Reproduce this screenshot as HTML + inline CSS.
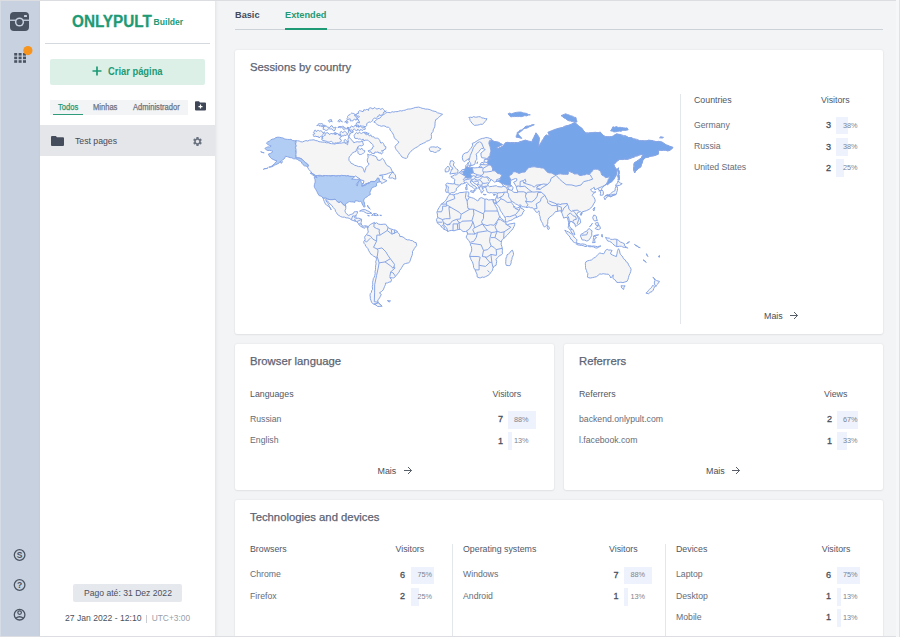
<!DOCTYPE html>
<html><head><meta charset="utf-8">
<style>
*{box-sizing:border-box;margin:0;padding:0}
html,body{width:900px;height:637px;overflow:hidden}
body{position:relative;background:#f3f4f6;font-family:"Liberation Sans",sans-serif;color:#5b6370}
.a{position:absolute;white-space:nowrap}
#side{left:0;top:0;width:40px;height:637px;background:#c8d1df;border-left:1px solid #d6dce6}
#panel{left:40px;top:0;width:175px;height:637px;background:#fff;box-shadow:1px 0 3px rgba(0,0,0,.08)}
#topline{left:0;top:0;width:900px;height:1px;background:#dcdde0}
#botline{left:0;top:636px;width:900px;height:1px;background:#dcdee2}
#rline{left:896px;top:0;width:4px;height:637px;background:#f6f7f9;border-right:1px solid #dfe1e4}
.card{position:absolute;background:#fff;border-radius:2px;box-shadow:0 0 2px rgba(0,0,0,.10),0 1px 2px rgba(0,0,0,.05)}
.ttl{margin-top:.7px;font-size:11.3px;color:#5c6473;position:absolute;white-space:nowrap;-webkit-text-stroke:.25px #5c6473}
.th{margin-top:-1px;font-size:8.8px;color:#505765;position:absolute;white-space:nowrap}
.td{margin-top:-.8px;font-size:8.7px;color:#666c78;position:absolute;white-space:nowrap}
.num{margin-top:.9px;font-size:9.1px;color:#4b505b;-webkit-text-stroke:.3px #4b505b;position:absolute;text-align:right;width:20px}
.bar{position:absolute;height:17.8px;margin-top:.5px;background:#edf2fc}
.pct{margin-top:-.8px;font-size:7.3px;color:#7d8491;position:absolute;white-space:nowrap}
.mais{margin-top:-.3px;font-size:8.9px;color:#4a4f59;position:absolute;white-space:nowrap}
.vdiv{position:absolute;width:1px;background:#e3e6ea}
</style></head><body>
<div id="side" class="a"></div>
<div id="panel" class="a"></div>
<div id="topline" class="a"></div>

<!-- sidebar icons -->
<svg class="a" style="left:0;top:0" width="40" height="637" viewBox="0 0 40 637">
  <rect x="10" y="12" width="19" height="19" rx="4" fill="#4a5361"/>
  <rect x="10" y="19.6" width="19" height="1.3" fill="#c8d1df"/>
  <circle cx="19.5" cy="22" r="4.6" fill="#c8d1df"/>
  <circle cx="19.5" cy="22" r="3.1" fill="#4a5361"/>
  <rect x="24" y="15" width="3" height="2" rx=".5" fill="#c8d1df"/>
  <g fill="#4a5361">
    <rect x="14.2" y="53" width="3" height="2.6"/><rect x="18.6" y="53" width="3" height="2.6"/><rect x="23" y="53" width="3" height="2.6"/>
    <rect x="14.2" y="56.6" width="3" height="2.6"/><rect x="18.6" y="56.6" width="3" height="2.6"/><rect x="23" y="56.6" width="3" height="2.6"/>
    <rect x="14.2" y="60.2" width="3" height="2.6"/><rect x="18.6" y="60.2" width="3" height="2.6"/><rect x="23" y="60.2" width="3" height="2.6"/>
  </g>
  <circle cx="27.9" cy="50.6" r="4.6" fill="#f7941d"/>
  <g fill="none" stroke="#4a5361" stroke-width="1.3">
    <circle cx="19.6" cy="555" r="5.3"/>
    <circle cx="19.6" cy="585" r="5.3"/>
    <circle cx="19.6" cy="614.7" r="5.3"/>
  </g>
  <text x="19.6" y="558.3" font-size="8.5" font-weight="bold" text-anchor="middle" fill="#4a5361" font-family="Liberation Sans">S</text>
  <text x="19.6" y="588.3" font-size="8.5" font-weight="bold" text-anchor="middle" fill="#4a5361" font-family="Liberation Sans">?</text>
  <circle cx="19.6" cy="612.6" r="1.8" fill="none" stroke="#4a5361" stroke-width="1.2"/>
  <path d="M15.8 618.3 Q19.6 615.2 23.4 618.3" fill="none" stroke="#4a5361" stroke-width="1.3"/>
</svg>

<!-- panel content -->
<div class="a" id="logo" style="left:72px;top:13px;font-size:16px;font-weight:bold;color:#1e9a75;-webkit-text-stroke:.3px #1e9a75;transform-origin:0 0;transform:scaleX(.955)">ONLYPULT</div>
<div class="a" id="builder" style="left:153.6px;top:17px;font-size:8.6px;font-weight:bold;color:#1e9a75">Builder</div>
<div class="a" style="left:45px;top:43px;width:165px;height:1px;background:#d5d9df"></div>
<div class="a" id="btn" style="left:50px;top:59px;width:155px;height:26px;background:#dcf0e8;border-radius:2px"></div>
<svg class="a" style="left:92px;top:66px" width="10" height="10"><path d="M5 .5V9.5M.5 5H9.5" stroke="#1e9a75" stroke-width="1.7"/></svg>
<div class="a" id="criar" style="left:107.5px;top:65px;font-size:10.7px;font-weight:bold;color:#1e9a75;transform-origin:0 0;transform:scaleX(.875)">Criar página</div>
<div class="a" style="left:50px;top:100px;width:138px;height:14.5px;background:#f3f4f6"></div>
<div class="a" style="left:52.5px;top:113.7px;width:30.5px;height:1.2px;background:#2f9c7c"></div>
<div class="a" id="todos" style="left:57.5px;top:102px;font-size:8.5px;color:#1e9a75;-webkit-text-stroke:.25px #1e9a75;transform-origin:0 0;transform:scaleX(.89)">Todos</div>
<div class="a" id="minhas" style="left:92.8px;top:102px;font-size:8.5px;color:#6b7280;-webkit-text-stroke:.25px #6b7280;transform-origin:0 0;transform:scaleX(.89)">Minhas</div>
<div class="a" id="admin" style="left:133px;top:102px;font-size:8.5px;color:#6b7280;-webkit-text-stroke:.25px #6b7280;transform-origin:0 0;transform:scaleX(.89)">Administrador</div>
<svg class="a" style="left:195px;top:101px" width="11" height="10" viewBox="0 0 11 10"><path d="M0 1.2Q0 .3 .9 .3H4L5 1.5H10Q11 1.5 11 2.5V8.6Q11 9.5 10 9.5H1Q0 9.5 0 8.6Z" fill="#3f4756"/><path d="M5.5 3.6V7.6M3.5 5.6H7.5" stroke="#fff" stroke-width="1.2"/></svg>
<div class="a" style="left:40px;top:125px;width:175px;height:31px;background:#e5e6e9"></div>
<svg class="a" style="left:51px;top:136px" width="13" height="10" viewBox="0 0 13 10"><path d="M0 1Q0 0 1 0H4.8L6 1.3H12Q13 1.3 13 2.3V9Q13 10 12 10H1Q0 10 0 9Z" fill="#454d5c"/></svg>
<div class="a" id="testpages" style="left:75px;top:135.5px;font-size:8.7px;color:#454b57">Test pages</div>
<svg class="a" style="left:192px;top:135.5px" width="11" height="11" viewBox="0 0 24 24"><path fill="#6b7280" d="M19.14 12.94c.04-.3.06-.61.06-.94 0-.32-.02-.64-.07-.94l2.03-1.58a.49.49 0 0 0 .12-.61l-1.92-3.32a.488.488 0 0 0-.59-.22l-2.39.96c-.5-.38-1.03-.7-1.62-.94l-.36-2.54a.484.484 0 0 0-.48-.41h-3.84c-.24 0-.43.17-.47.41l-.36 2.54c-.59.24-1.13.57-1.62.94l-2.39-.96c-.22-.08-.47 0-.59.22L2.74 8.87c-.12.21-.08.47.12.61l2.03 1.58c-.05.3-.09.63-.09.94s.02.64.07.94l-2.03 1.58a.49.49 0 0 0-.12.61l1.92 3.32c.12.22.37.29.59.22l2.39-.96c.5.38 1.03.7 1.62.94l.36 2.54c.05.24.24.41.48.41h3.84c.24 0 .44-.17.47-.41l.36-2.54c.59-.24 1.13-.56 1.62-.94l2.39.96c.22.08.47 0 .59-.22l1.92-3.32c.12-.22.07-.47-.12-.61l-2.01-1.58zM12 15.6c-1.98 0-3.6-1.62-3.6-3.6s1.62-3.6 3.6-3.6 3.6 1.62 3.6 3.6-1.62 3.6-3.6 3.6z"/></svg>

<div class="a" style="left:73px;top:584px;width:108.5px;height:18px;background:#e5e8ed;border-radius:2px"></div>
<div class="a" id="pago" style="left:84px;top:587.5px;font-size:8.6px;color:#4b5260">Pago até: 31 Dez 2022</div>
<div class="a" id="date" style="left:65px;top:613px;font-size:8.6px;color:#4b5260">27 Jan 2022 - 12:10</div><div class="a" style="left:146.4px;top:615.2px;width:1px;height:7.5px;background:#c9cdd3"></div><div class="a" id="utc" style="left:151.7px;top:613px;font-size:8.4px;color:#9aa0aa">UTC+3:00</div>

<!-- tabs -->
<div class="a" id="basic" style="left:235px;top:10px;font-size:9.2px;font-weight:bold;color:#434b59">Basic</div>
<div class="a" id="ext" style="left:285px;top:10px;font-size:9.2px;font-weight:bold;color:#1e9a75">Extended</div>
<div class="a" style="left:235px;top:29px;width:648px;height:1px;background:#cdd2d9"></div>
<div class="a" style="left:285px;top:27.5px;width:42px;height:2px;background:#1e9a75"></div>

<!-- card 1 -->
<div class="card" style="left:235px;top:50px;width:648px;height:284px"></div>
<div class="ttl" id="t1" style="left:250px;top:60px">Sessions by country</div>
<div class="vdiv" style="left:680px;top:94px;height:230px"></div>
<div class="th" id="h1" style="left:694px;top:95.5px">Countries</div>
<div class="th" style="left:821px;top:95.5px">Visitors</div>
<div class="td" style="left:694px;top:120.5px">Germany</div>
<div class="num" style="left:811px;top:119.5px">3</div>
<div class="bar" style="left:836px;top:116px;width:12px"></div>
<div class="pct" style="left:843px;top:121.5px">38%</div>
<div class="td" style="left:694px;top:141.7px">Russia</div>
<div class="num" style="left:811px;top:140.7px">3</div>
<div class="bar" style="left:836px;top:137.5px;width:12px"></div>
<div class="pct" style="left:843px;top:142.7px">38%</div>
<div class="td" style="left:694px;top:163px">United States</div>
<div class="num" style="left:811px;top:162px">2</div>
<div class="bar" style="left:836px;top:158.7px;width:8px"></div>
<div class="pct" style="left:843px;top:164px">25%</div>
<div class="mais" style="left:764px;top:311px">Mais</div>
<svg class="a" style="left:789px;top:311px" width="10" height="9" viewBox="0 0 10 9"><path d="M1 4.5H8.5M5 1L8.5 4.5L5 8" fill="none" stroke="#505661" stroke-width=".95"/></svg>
<!--MAP--><svg class="a" style="left:0;top:0" width="900" height="637" viewBox="0 0 900 637">
<g stroke="#88a6e6" stroke-width="1.0" stroke-linejoin="round">
<path fill="#f5f5f6" d="M450.1 193.5L451.3 192.7L453.8 192.7L455.2 191.6L456.5 190.1L456.0 189.0L457.3 187.4L458.8 186.5L460.1 185.2L460.9 183.9L462.4 183.9L464.6 183.3L466.4 182.3L467.5 182.8L468.0 183.6L469.1 185.1L470.2 185.9L471.8 186.7L473.1 187.6L473.9 188.4L474.6 189.8L474.1 191.0L474.6 191.2L475.8 189.6L475.9 187.8L477.2 188.6L476.8 187.6L475.5 186.9L474.8 185.8L472.5 185.0L471.7 183.4L470.6 182.9L470.3 180.9L472.0 180.6L472.1 181.8L472.7 181.1L473.6 182.8L475.0 183.6L476.9 184.8L478.4 186.6L478.5 187.8L479.2 188.9L480.9 190.6L481.0 192.5L481.9 193.1L482.3 191.6L483.3 191.2L483.9 190.4L482.4 189.2L482.4 187.6L483.4 188.4L484.1 187.2L485.8 187.3L486.1 188.2L486.1 188.5L486.7 190.5L487.4 192.3L489.4 192.9L491.3 192.5L492.7 193.0L495.7 192.6L497.5 192.9L497.1 194.3L496.7 196.3L496.1 197.8L495.4 199.5L494.8 199.9L493.1 199.6L493.3 201.4L494.4 202.7L495.2 204.1L496.1 201.9L496.9 204.6L498.6 206.4L499.7 208.5L500.2 210.1L500.9 211.6L502.2 212.8L502.8 214.4L503.8 215.6L504.7 217.1L505.4 218.6L505.4 220.4L505.7 222.1L507.5 221.8L508.9 220.8L510.6 220.5L512.2 219.8L513.9 218.5L515.8 217.6L517.9 216.9L519.3 216.1L520.9 215.6L522.1 214.6L523.0 212.3L524.4 210.4L523.0 209.1L520.9 208.1L520.4 205.7L519.3 207.1L517.2 208.0L515.0 208.4L514.7 206.1L513.9 207.4L513.5 205.3L512.3 203.7L510.9 202.1L511.6 201.3L514.1 202.6L515.5 203.9L517.2 204.6L518.8 205.5L520.4 204.7L522.1 206.7L523.7 206.8L525.3 207.1L527.1 207.6L529.0 206.9L530.7 207.8L532.6 207.7L533.5 208.9L534.8 210.2L535.5 211.5L537.1 212.6L539.0 210.8L539.3 212.7L539.2 214.6L540.1 216.6L540.3 218.8L541.5 221.7L542.6 223.3L543.1 225.2L544.5 227.2L545.8 225.8L547.3 224.7L547.8 223.1L547.7 221.5L548.0 219.6L548.8 217.9L551.1 216.1L552.6 214.9L554.0 213.6L555.4 211.6L557.1 211.5L558.8 211.0L560.8 210.7L562.1 213.3L562.5 214.9L563.2 216.5L563.6 218.1L566.0 217.3L567.4 217.5L568.1 220.4L568.6 222.3L568.6 225.2L568.2 227.5L569.3 228.9L570.5 230.3L571.8 233.1L573.3 233.7L574.5 235.0L574.9 234.8L574.0 232.1L572.8 229.5L570.8 228.3L569.7 226.5L569.2 224.5L570.0 222.1L570.8 221.1L573.0 222.5L574.9 224.4L575.6 226.7L576.8 225.5L578.2 224.7L580.6 222.9L580.6 220.7L579.5 218.0L578.2 216.3L576.6 214.9L577.8 212.4L580.5 211.6L581.8 213.0L582.0 212.0L584.1 211.3L586.3 210.7L589.2 209.3L590.8 208.0L592.5 206.1L593.7 203.8L595.1 201.4L595.1 199.8L594.0 197.5L592.2 195.3L593.3 193.6L595.9 191.8L594.3 192.1L592.7 192.1L591.6 190.8L590.4 189.7L592.5 188.5L594.2 187.3L594.8 189.8L596.3 189.1L597.8 188.5L599.1 190.1L600.5 191.7L600.5 193.4L600.2 195.2L601.7 195.3L603.2 194.8L603.4 193.0L603.1 191.3L601.4 189.4L601.6 188.5L603.0 187.3L604.1 185.9L605.0 185.2L606.5 184.1L607.6 184.6L609.4 183.0L611.5 181.9L612.7 180.4L613.8 178.8L615.2 177.5L616.0 175.7L616.5 173.9L616.6 172.0L617.1 169.6L615.4 168.2L614.3 166.3L613.6 164.2L615.4 163.3L616.3 161.5L617.9 160.6L619.4 159.4L621.1 159.6L622.8 159.0L624.5 159.2L626.3 158.7L628.0 159.1L629.6 158.7L631.2 158.2L632.7 157.4L634.3 157.1L635.7 156.1L637.3 155.9L638.8 155.1L640.4 154.8L642.0 154.5L643.6 154.1L642.9 155.5L641.8 156.8L641.3 158.4L639.7 158.9L638.6 160.1L637.1 160.8L636.1 162.1L634.5 162.6L634.0 164.4L633.8 166.3L633.7 168.2L633.6 169.8L634.0 171.4L634.6 172.9L635.6 171.2L637.0 169.7L638.8 168.2L640.8 166.9L641.3 164.7L642.2 162.5L642.8 160.3L643.7 158.7L645.3 157.7L646.9 157.3L648.4 156.7L650.0 156.2L651.6 155.8L653.3 155.8L655.1 155.5L656.6 154.3L658.4 154.1L658.2 152.1L658.4 150.1L660.2 150.1L661.9 150.6L663.7 150.0L665.5 150.4L667.2 150.6L669.0 150.6L670.5 149.9L671.8 148.8L673.0 147.5L671.4 146.6L669.6 146.4L668.0 145.7L666.4 145.0L664.8 144.1L663.5 142.7L661.8 142.1L660.2 141.4L658.5 141.9L656.8 141.7L655.1 141.4L653.5 141.1L651.9 140.7L650.2 140.4L648.4 140.4L646.7 140.7L644.9 141.0L643.1 140.7L641.4 140.7L639.6 140.7L638.1 140.1L636.6 139.3L635.0 139.0L633.4 138.7L631.8 138.1L630.3 137.6L628.5 137.6L627.1 136.7L625.4 135.9L623.7 135.6L621.9 135.0L620.2 134.6L618.3 134.5L616.6 134.0L615.0 135.0L613.5 136.1L611.7 136.7L609.6 136.6L607.5 137.1L605.5 136.7L603.9 135.9L602.7 134.7L601.4 133.6L600.3 132.2L598.7 132.5L597.1 132.8L595.4 133.0L593.8 132.9L592.1 133.1L590.5 132.9L588.8 133.3L587.2 132.7L585.5 133.1L584.5 131.6L583.2 130.2L581.5 127.9L579.7 127.0L578.1 125.6L576.4 124.3L575.1 122.7L573.3 123.6L571.5 124.3L569.8 125.2L567.9 125.6L566.1 125.9L564.3 126.4L562.8 127.4L561.0 127.9L558.8 128.5L556.5 129.1L554.9 130.1L553.2 130.8L551.4 131.2L549.7 132.0L548.0 132.4L548.8 134.4L550.2 136.1L548.2 135.9L546.2 135.1L544.5 136.7L544.0 138.7L542.3 140.0L541.7 141.9L540.5 143.4L539.7 145.2L538.3 146.5L538.5 144.8L538.2 143.0L538.9 141.3L539.4 139.6L539.2 137.8L538.4 136.0L537.2 134.4L536.0 132.9L535.5 134.5L534.7 135.9L534.1 137.5L533.2 138.8L532.4 140.5L532.0 142.3L530.3 141.7L528.7 141.0L526.9 140.9L525.2 140.2L523.4 141.1L521.4 141.3L519.5 141.8L517.8 142.8L516.0 142.5L514.3 142.5L512.6 142.5L510.8 142.5L509.1 143.0L507.3 142.7L505.6 142.7L504.7 144.0L503.6 145.2L502.4 146.6L500.7 147.3L497.9 148.6L496.1 147.7L499.0 146.3L500.5 145.1L502.4 144.6L500.3 143.6L498.4 142.3L496.3 142.1L494.2 141.5L491.8 140.4L491.7 139.0L489.7 138.4L487.8 137.7L485.7 137.6L484.1 138.2L482.4 138.4L480.8 138.9L479.3 139.5L477.8 140.4L476.0 141.6L474.2 142.7L472.2 143.4L472.7 145.2L471.9 146.8L470.9 148.3L469.9 149.7L468.6 150.9L467.7 152.5L465.4 152.9L463.4 154.1L462.6 155.8L462.3 157.7L462.8 160.1L464.3 161.8L465.7 160.7L467.2 159.7L468.5 158.6L468.9 160.5L469.9 162.2L470.8 163.8L471.1 165.7L474.1 164.7L475.0 163.9L475.3 162.1L475.4 160.8L476.9 159.6L476.7 157.8L476.7 156.0L476.0 154.2L477.6 153.0L478.9 151.5L480.1 149.9L481.5 148.4L483.5 148.7L485.3 149.5L483.7 150.5L482.5 152.0L480.9 153.0L481.1 155.8L481.7 157.7L484.8 158.1L486.8 158.5L488.8 158.8L490.8 158.6L488.2 159.4L486.3 159.5L484.4 159.4L484.2 161.1L483.7 163.4L482.0 162.1L480.2 164.2L480.3 165.5L479.1 167.1L477.6 167.6L475.8 167.8L474.1 167.9L472.1 167.5L470.1 168.0L467.8 167.7L467.6 166.6L468.2 164.5L468.4 162.2L467.2 164.2L465.6 165.8L466.2 168.3L464.1 169.4L461.8 169.9L461.0 171.4L458.5 172.9L456.4 175.0L454.5 174.9L452.8 176.0L450.8 176.6L452.1 177.8L453.8 178.4L454.9 179.8L454.4 181.7L454.5 183.6L452.9 183.9L449.8 183.6L447.3 183.2L445.7 184.4L446.4 186.9L446.2 188.6L445.5 190.1L446.1 192.3L447.3 192.3L449.1 193.0ZM449.6 193.9L451.6 194.6L453.8 194.8L455.6 194.0L457.8 193.7L459.7 192.6L462.0 192.5L464.3 192.2L465.9 191.9L467.6 191.9L468.8 192.2L468.8 194.3L467.8 196.3L469.6 197.0L471.3 197.6L473.6 198.3L475.7 199.6L477.4 200.8L478.8 200.2L479.2 198.6L481.4 197.6L483.6 198.6L484.9 199.3L486.7 199.0L488.5 200.0L490.3 199.8L492.9 199.5L493.2 201.4L493.9 203.1L494.8 204.7L495.9 206.7L497.1 208.7L497.2 210.6L498.2 212.1L498.7 213.9L499.2 215.6L500.1 217.1L501.3 218.6L503.3 219.9L504.9 221.6L505.4 223.2L507.5 224.6L509.8 223.9L512.1 223.6L514.7 223.0L514.7 224.6L514.0 226.6L513.0 228.5L511.9 230.1L510.4 231.3L509.3 232.9L507.9 234.2L506.5 235.6L505.3 237.2L503.7 238.4L502.3 239.5L501.5 241.0L501.4 242.6L501.1 244.2L501.8 246.4L502.4 248.7L502.4 250.4L502.2 252.0L502.6 253.7L501.2 254.9L499.5 255.6L498.3 257.1L497.1 258.2L495.9 259.3L496.7 261.3L496.4 263.3L496.1 265.3L493.4 266.7L492.8 268.3L492.6 270.1L491.6 271.5L490.5 272.9L489.5 274.3L488.1 275.4L485.4 276.7L483.9 277.4L482.2 277.0L480.7 277.8L479.1 277.8L477.2 277.0L477.0 274.2L476.0 272.1L475.1 269.9L473.6 267.5L473.4 265.2L472.8 263.0L472.1 261.4L471.1 259.9L470.5 258.2L469.7 256.6L470.1 253.9L470.9 252.4L471.6 250.9L471.7 248.7L471.3 246.5L470.5 245.0L470.3 243.3L469.6 241.9L468.7 240.5L467.3 238.9L466.2 237.2L466.7 235.6L467.5 234.2L467.3 231.9L465.3 231.5L463.1 231.6L461.7 230.4L460.2 229.2L458.1 229.6L456.1 230.1L454.0 230.8L451.8 230.4L449.7 230.7L447.8 231.5L446.1 230.1L444.0 229.3L442.6 228.1L441.3 226.8L440.7 225.6L439.2 224.4L437.5 223.3L436.9 221.5L436.4 219.6L437.7 217.5L437.5 215.8L437.4 214.0L436.9 212.3L437.5 210.6L438.2 209.0L439.3 207.3L440.4 205.5L441.5 203.8L443.0 203.1L444.2 201.9L445.4 200.8L446.8 198.9L447.6 196.7L448.9 195.5ZM512.4 250.2L513.2 252.2L513.6 254.3L512.9 256.0L512.1 257.7L511.9 259.5L511.1 261.0L511.2 262.7L510.7 264.2L509.9 265.6L508.2 265.6L506.4 265.5L505.7 263.5L505.8 261.3L505.9 259.7L506.0 258.0L506.8 256.5L507.0 254.8L508.5 253.9L509.9 252.8L510.9 251.1ZM452.9 160.8L454.2 162.4L453.3 165.0L454.9 167.4L456.5 168.9L458.1 170.0L457.9 171.4L457.9 172.6L456.6 173.1L454.0 173.4L451.9 173.6L449.9 174.1L450.6 171.9L451.2 171.1L451.2 169.3L452.9 169.1L452.3 167.4L450.6 166.6L449.7 164.2L450.2 162.6L450.5 160.9ZM448.0 166.1L449.5 168.0L449.0 170.9L447.3 171.8L445.4 172.0L445.1 169.7L446.4 167.7ZM437.5 146.7L439.0 148.0L440.8 148.6L439.2 150.8L437.6 151.0L436.3 152.2L434.7 152.5L432.7 151.5L430.4 151.4L429.0 148.6L430.7 147.1L432.4 146.9L434.1 146.9L435.8 147.3ZM470.8 190.6L472.4 191.0L474.1 190.8L473.5 192.7L470.5 191.7ZM466.8 186.7L467.2 189.6L465.9 189.8L465.6 187.2ZM467.0 184.3L466.8 186.5L466.1 185.1ZM483.2 194.3L486.2 194.6L484.2 194.9ZM495.6 194.2L494.7 195.4L493.1 194.8ZM547.6 225.3L548.8 226.7L549.5 228.5L548.1 229.6L547.2 227.3ZM604.0 197.5L605.3 195.8L607.0 195.6L608.6 195.5L610.2 195.3L612.0 194.8L613.7 194.3L615.5 194.2L615.6 194.9L614.1 195.1L612.4 196.0L610.6 196.6L608.9 195.8L607.2 196.9L605.9 198.2L605.0 199.8ZM605.5 195.7L606.9 194.8L608.7 194.7L610.2 194.2L612.1 192.3L613.6 191.4L615.1 190.6L615.2 188.6L616.0 186.7L617.3 186.6L617.5 188.5L617.4 190.4L616.7 192.3L616.2 194.4L614.5 194.8L612.9 195.3L610.9 196.9L609.2 196.1L607.5 195.4ZM615.7 186.3L616.1 184.4L617.6 182.9L617.9 180.9L619.2 182.1L620.5 183.1L622.2 183.7L619.5 185.4L617.8 185.5L616.3 185.0ZM594.8 207.1L594.5 209.1L593.8 211.0L593.0 209.2ZM582.2 213.3L581.0 215.5L580.0 214.0ZM593.7 215.2L595.4 215.4L596.5 216.9L596.6 218.9L597.5 220.4L594.6 221.0L593.5 219.8L592.7 217.6ZM599.2 225.3L600.0 226.8L600.5 228.5L598.6 229.6L596.8 229.4L595.2 228.5L596.9 226.8ZM597.8 222.2L598.6 225.1L596.4 225.6L595.2 223.3ZM592.4 223.3L591.1 225.1L589.7 226.8L591.2 225.1ZM589.4 228.5L590.5 229.9L592.1 230.8L591.7 233.0L591.8 235.3L590.8 237.2L589.8 238.9L588.4 240.5L586.7 241.0L584.5 240.1L582.1 239.9L581.3 237.9L580.4 235.9L581.1 234.2L583.0 233.4L584.6 232.0L586.7 231.3L587.7 229.6ZM564.8 230.1L566.6 231.2L568.5 231.9L570.0 233.0L571.7 233.9L573.0 235.3L574.0 237.1L575.6 238.4L577.0 239.9L576.6 241.5L576.8 243.2L574.7 242.7L573.0 241.6L572.3 240.1L570.8 239.2L570.2 237.6L569.0 235.7L567.3 234.2L566.4 232.8L565.5 231.5ZM577.0 243.3L578.9 243.6L580.8 244.2L582.7 243.9L584.6 244.3L586.7 245.2L586.7 246.5L584.9 246.5L583.3 245.7L581.5 245.4L579.8 245.2L578.0 244.9L576.3 244.2ZM587.6 245.8L589.7 245.7L591.8 246.2L593.7 246.0L595.6 246.3L597.5 246.7L599.2 246.2L600.9 245.9L598.6 247.3L596.9 248.1L595.2 247.8L593.6 246.9L591.8 246.6L590.1 246.8L588.4 246.5ZM598.6 234.8L596.9 235.1L595.3 235.8L593.5 235.9L593.5 237.6L593.3 239.3L593.2 241.1L592.4 242.7L595.2 242.5L594.7 240.7L594.6 238.8L596.6 237.6L594.1 235.9L595.7 235.2L597.5 235.3ZM602.0 234.2L602.6 237.0L601.5 236.5ZM605.5 237.4L607.4 238.0L609.4 238.2L610.6 239.3L612.7 239.4L614.8 239.1L616.8 239.4L618.7 240.5L620.3 242.0L622.3 242.7L624.6 243.9L624.2 245.7L626.2 246.7L627.7 248.2L626.1 247.5L624.5 247.5L622.9 247.0L621.4 246.3L619.7 246.2L616.8 246.7L615.4 246.0L614.0 245.0L612.6 243.6L611.1 242.2L609.5 241.4L607.7 241.0L606.6 239.3ZM629.4 241.6L628.8 242.7L626.5 243.5L627.7 242.5ZM605.5 250.4L607.2 249.3L608.7 250.1L610.5 250.0L612.1 250.5L611.0 252.1L610.6 253.9L612.4 255.0L614.4 255.8L616.4 256.6L616.7 255.0L617.1 253.4L617.3 251.8L617.8 250.2L618.5 248.7L619.6 250.8L619.9 253.1L620.6 254.6L621.9 255.8L622.8 257.1L623.5 258.7L625.2 259.9L626.3 261.9L628.0 263.1L628.5 264.8L629.4 266.3L630.5 267.8L631.1 269.4L630.7 271.5L630.0 273.5L629.1 275.4L628.5 277.4L628.0 279.4L627.0 281.3L624.9 282.0L622.9 282.6L620.9 282.2L618.9 282.5L616.8 282.4L616.0 281.0L614.9 279.8L613.4 278.9L612.9 278.0L613.1 276.4L613.2 274.8L612.2 276.5L610.8 278.0L609.9 275.9L608.3 274.2L606.6 274.2L604.9 274.0L603.2 273.7L601.5 274.2L599.8 273.9L598.1 275.4L596.4 276.7L594.4 277.2L592.5 277.6L590.5 278.0L588.9 277.8L587.4 277.1L587.6 275.3L587.9 273.6L586.9 272.2L586.5 270.5L585.8 269.0L585.5 267.4L585.5 265.5L585.3 263.7L585.8 261.9L587.6 260.8L589.6 260.4L591.6 259.9L593.4 258.3L595.4 257.2L596.9 255.8L598.3 254.3L599.6 252.9L601.7 253.5L603.8 253.8L604.7 252.2ZM621.1 285.7L623.1 285.9L625.1 285.8L624.0 287.5L623.6 289.5L621.7 288.0ZM652.9 277.2L654.2 278.3L655.4 279.4L656.5 280.6L659.5 281.4L657.8 283.9L656.5 285.1L655.8 286.7L654.4 283.9L654.4 282.1L655.0 280.5L654.1 278.7ZM652.9 285.2L654.6 286.9L653.8 288.4L653.3 290.1L652.0 291.6L650.1 292.3L648.7 293.7L645.9 293.1L647.3 292.1L648.3 290.7L649.4 289.4L650.7 288.1L652.0 286.8ZM643.0 259.8L644.9 260.8L646.3 262.4L644.7 261.3ZM659.5 255.4L659.5 257.2L658.2 256.6ZM634.5 244.4L635.9 245.3L637.3 246.1L638.6 247.1L640.2 247.7L638.5 247.3L637.2 246.2L635.6 245.6ZM646.5 253.7L646.9 255.3L647.9 256.6L647.0 254.8ZM418.7 107.1L420.4 107.6L422.1 108.3L423.8 108.6L425.5 109.1L427.3 109.1L429.1 109.4L430.8 110.0L432.4 110.8L434.1 111.2L435.9 111.6L437.4 112.8L439.2 113.2L440.9 113.8L442.6 114.3L441.2 115.3L439.8 116.3L438.5 117.4L437.4 118.8L435.8 119.5L435.3 121.3L435.0 123.1L435.0 125.0L434.7 126.8L434.0 128.3L433.2 129.9L433.0 131.6L431.7 133.0L431.2 134.6L431.5 136.7L431.2 138.8L429.8 140.0L428.2 140.8L426.4 141.3L425.0 142.6L423.3 143.2L421.7 144.0L420.0 144.7L418.7 145.9L417.3 146.9L415.7 147.7L414.2 148.6L412.5 149.9L411.0 151.2L409.6 152.8L408.7 154.2L407.9 155.5L407.6 157.2L406.4 158.4L404.8 158.2L403.2 157.6L401.8 156.9L400.9 155.3L399.5 154.0L398.6 152.4L397.4 151.0L396.3 149.8L395.5 148.3L395.0 146.7L396.1 145.0L397.7 143.7L398.8 142.1L397.6 140.8L396.3 139.6L394.8 138.6L394.1 137.1L393.7 135.5L393.1 134.0L392.2 132.6L391.3 131.3L390.1 130.1L389.8 128.4L388.6 127.2L386.7 127.2L385.0 126.1L383.2 125.8L381.3 126.3L379.5 125.5L377.7 125.1L376.6 123.9L375.3 122.7L373.8 122.0L375.2 120.9L376.6 119.7L378.0 118.6L379.9 118.1L381.1 116.7L382.5 115.2L384.2 114.3L385.7 113.0L387.3 112.4L388.9 112.5L390.6 112.7L392.1 111.7L393.8 112.1L395.4 111.6L397.0 111.7L398.6 111.3L400.2 110.7L401.9 111.0L403.4 110.4L405.1 110.2L406.7 109.4L408.4 109.0L410.2 109.0L411.9 108.6L413.6 108.1L415.2 107.5L417.0 107.3ZM468.8 117.5L470.4 117.2L472.1 117.5L473.6 116.6L475.3 117.2L476.9 117.1L478.5 116.7L480.3 116.8L481.8 117.9L483.6 118.1L485.2 118.7L487.0 118.7L486.1 120.3L484.9 121.7L483.7 123.1L482.5 124.4L480.8 124.2L479.3 124.7L477.7 125.1L476.1 125.2L474.5 125.4L473.2 124.3L471.9 123.2L471.1 121.8L470.0 120.5L469.8 118.7ZM314.5 130.4L315.6 130.1L316.4 131.8L317.7 130.3L318.7 130.5L319.7 131.2L320.8 130.7L321.8 131.2L322.6 132.7L323.6 132.7L324.8 132.0L323.7 132.7L323.6 133.9L322.5 134.7L322.0 135.7L322.5 137.2L321.4 137.0L320.4 136.5L319.1 138.0L318.2 136.3L317.0 136.9L316.0 136.1L314.9 136.3L313.8 136.5L313.4 135.5L313.0 134.4L315.1 133.6L313.4 132.4L314.3 131.4ZM325.9 133.1L327.0 132.8L328.0 132.8L328.9 134.0L329.9 134.6L331.1 133.1L332.0 134.1L333.1 133.4L334.0 134.1L335.1 133.8L336.2 133.4L337.2 133.5L338.2 133.7L339.0 135.5L340.2 134.6L340.4 135.7L341.2 136.6L339.8 137.9L339.8 139.0L341.2 139.8L341.3 140.9L340.6 142.0L339.6 142.2L338.8 142.8L337.6 142.5L336.9 143.4L335.6 142.8L334.5 143.3L333.4 143.1L332.4 142.2L331.5 141.4L330.4 141.5L329.2 142.2L328.1 142.0L327.1 141.7L326.1 141.1L325.0 141.0L324.1 140.6L322.8 140.7L322.1 139.8L321.4 138.8L322.9 138.7L322.0 136.6L323.3 136.4L324.2 135.7L325.3 135.3L324.8 133.5ZM322.5 125.6L323.6 125.2L324.7 125.3L325.7 125.8L326.7 126.1L327.6 127.4L328.7 127.3L329.8 127.5L331.1 125.7L332.1 125.8L333.0 127.5L334.0 128.1L335.1 127.3L336.2 127.5L335.4 128.7L335.0 130.0L333.9 131.1L332.9 130.1L331.8 128.8L330.7 129.0L329.7 128.9L328.6 128.5L327.4 130.2L326.3 130.4L325.2 130.2L324.2 129.3L323.1 129.3L323.3 128.0L323.7 126.7ZM321.9 123.2L322.5 124.4L323.4 125.0L324.1 126.0L325.4 126.3L324.3 126.3L323.2 126.0L322.1 127.1L321.1 125.3L320.0 126.5L319.0 124.8L317.9 125.4L316.8 125.6L317.7 124.7L318.5 123.9L319.7 123.6L321.1 124.0ZM372.0 108.5L373.0 109.0L374.1 107.7L375.1 107.7L376.1 108.8L377.1 109.0L378.1 108.6L379.2 108.3L380.1 109.3L381.1 109.1L382.6 108.4L383.4 109.4L384.3 110.2L384.9 111.7L386.3 111.0L385.1 111.6L383.8 112.0L383.4 113.5L382.5 114.1L381.9 115.1L381.0 115.6L379.2 114.7L378.9 116.2L377.7 116.2L377.0 117.5L376.3 118.6L374.8 118.0L373.8 118.5L372.8 119.4L372.6 120.8L371.5 121.4L370.6 122.3L369.0 121.9L368.1 122.7L366.6 123.7L366.9 125.4L366.0 126.2L365.1 126.8L364.0 126.3L362.9 126.1L361.8 126.2L360.7 125.5L359.5 126.5L358.4 125.1L357.3 125.1L356.1 125.6L356.1 123.7L357.0 123.2L357.4 122.0L359.3 123.0L359.5 121.5L358.5 121.2L358.5 119.6L357.2 119.5L357.5 118.2L358.3 117.4L359.5 116.9L358.6 115.9L357.1 116.5L356.5 114.6L355.0 115.1L356.1 114.6L356.9 113.4L358.4 113.5L358.4 111.6L359.4 110.7L360.6 110.9L361.9 111.3L363.1 111.7L363.9 109.6L365.2 110.2L366.1 109.7L367.0 109.1L368.4 110.6L368.9 108.4L369.8 108.0L370.8 107.8ZM353.8 113.5L354.8 114.2L354.6 115.9L356.1 116.2L356.3 117.8L357.8 118.2L356.5 118.9L356.1 120.3L354.8 119.2L353.7 119.5L352.7 121.0L351.6 120.8L350.3 121.0L350.2 118.9L349.1 118.9L347.4 119.9L347.0 118.5L347.7 117.7L347.5 116.5L348.1 115.6L349.0 115.0L349.9 114.6L350.7 113.8L351.5 113.1L352.7 113.4ZM355.0 125.6L356.1 125.5L356.8 127.1L358.2 125.4L358.8 127.5L360.2 126.0L361.2 126.5L362.0 127.8L363.0 128.0L364.2 127.3L365.2 127.7L365.2 129.3L363.7 129.4L362.9 130.2L361.9 130.5L360.9 129.2L359.8 130.8L358.8 130.4L357.8 129.1L356.7 131.1L355.7 130.1L354.7 129.2L353.6 129.2L352.5 130.9L351.6 129.8L350.0 130.3L348.9 129.8L348.5 127.5L347.0 127.9L347.8 127.1L349.1 127.9L350.2 128.0L350.9 126.4L351.8 126.0L353.3 127.2L354.0 126.2ZM342.4 126.3L343.6 126.4L343.9 127.9L345.2 127.7L345.9 128.6L344.7 129.1L343.5 129.6L342.5 127.7L341.4 127.3L340.2 127.8L339.1 127.0L337.9 127.9L338.7 126.5L340.0 126.5L341.3 126.7ZM359.5 132.0L360.5 133.3L361.6 133.5L363.0 132.4L364.2 132.3L365.2 133.1L366.4 133.5L367.5 134.1L368.6 134.6L369.3 136.0L371.0 134.8L371.4 136.5L372.5 136.8L373.8 136.7L374.3 137.8L375.3 138.2L376.4 138.2L377.6 138.0L378.3 138.8L379.3 139.6L379.9 140.7L380.2 141.9L380.8 143.1L382.7 142.6L383.5 143.5L384.0 144.8L384.5 146.2L385.9 146.7L385.8 148.0L385.5 149.2L384.0 149.5L383.3 151.0L381.7 150.5L382.1 151.5L382.8 152.5L382.2 153.5L381.1 154.1L380.4 152.6L378.9 153.2L378.1 151.9L376.6 152.3L374.9 152.0L374.3 153.7L372.9 153.5L371.6 153.2L370.9 151.7L369.2 152.2L368.1 150.8L369.1 150.4L370.3 150.3L371.0 149.3L372.0 149.0L372.6 148.1L372.7 146.9L373.8 146.3L373.0 145.5L372.6 144.4L371.9 143.6L370.9 143.2L370.3 142.1L369.2 141.5L368.4 140.6L367.4 140.1L366.3 140.2L365.2 140.2L363.9 140.9L363.1 139.0L361.7 140.0L360.7 139.2L359.5 138.9L358.3 139.2L357.3 138.2L356.1 138.6L354.7 138.1L354.4 136.7L354.1 135.3L355.0 134.2L355.6 133.2L356.4 132.6L358.1 133.7L358.7 132.6ZM348.1 130.9L349.2 130.6L350.2 130.8L351.1 132.3L352.2 131.3L353.3 131.3L353.0 132.5L351.3 132.4L350.9 133.5L349.7 133.7L349.8 135.3L348.4 135.8L347.6 134.6L347.7 133.4L348.7 132.2ZM341.3 131.3L342.2 132.3L343.1 132.7L344.6 130.9L345.5 131.7L346.4 132.4L347.1 133.7L346.8 134.7L345.9 135.7L344.6 134.9L343.8 136.0L342.6 135.5L341.9 136.7L340.9 136.3L340.9 134.7L339.6 134.6L340.1 133.5L340.2 132.2ZM358.4 147.7L359.2 148.7L360.0 149.6L361.9 148.2L362.5 149.7L363.5 150.3L364.6 150.5L364.7 152.1L363.5 153.2L362.4 153.7L361.4 154.4L360.2 154.5L358.9 154.1L357.9 153.1L358.0 151.6L357.2 150.5L357.9 149.7L357.4 148.3ZM344.1 140.2L345.5 139.5L346.3 140.5L347.0 141.6L348.1 141.5L347.5 142.6L346.4 142.8L345.3 142.8L344.1 141.8ZM393.1 171.9L394.0 173.6L395.4 175.0L395.6 177.1L395.9 179.1L394.1 178.8L392.5 177.8L390.7 178.1L388.8 177.8L390.0 175.0L391.5 173.4ZM362.6 209.6L365.2 209.7L367.2 210.7L369.2 211.6L371.8 213.4L369.9 213.3L368.1 213.5L366.4 213.1L364.9 212.3L363.5 211.3L361.6 211.0L359.6 211.1L361.1 210.3ZM373.4 213.6L375.1 213.5L376.7 213.8L378.4 215.3L376.7 215.6L374.9 215.5L373.3 215.1L371.6 215.4ZM367.7 215.2L369.4 215.8L368.1 215.9ZM379.8 215.2L381.6 215.3L381.1 215.8ZM367.5 205.2L368.1 207.4L370.3 209.1L369.2 208.0L368.2 206.7ZM387.4 300.6L390.5 300.9L389.1 302.1ZM378.2 302.6L379.4 303.8L380.9 304.9L382.1 306.2L379.9 306.4L377.7 306.5L375.9 305.0L373.8 304.0L376.1 303.7ZM295.8 140.7L297.5 140.8L299.2 141.0L300.8 141.8L302.6 141.9L304.2 141.2L305.9 140.6L307.8 141.0L309.4 140.2L311.7 140.0L314.0 139.8L315.6 140.6L317.4 140.8L319.0 141.7L320.8 141.9L322.7 142.2L324.7 142.2L326.5 142.8L328.3 142.7L329.9 143.4L331.6 143.7L333.3 143.8L335.0 144.1L336.6 143.2L338.2 143.5L339.8 143.2L341.5 143.1L343.1 142.7L344.7 142.8L346.3 143.7L347.6 144.8L347.8 143.1L348.4 141.4L347.9 139.5L348.5 137.8L348.7 136.1L349.8 137.9L351.0 139.5L352.7 140.9L353.8 142.8L355.5 142.2L357.2 141.7L359.0 142.0L360.8 141.7L362.4 140.9L362.9 142.8L363.5 144.8L361.7 145.8L359.6 145.7L357.8 146.7L357.3 148.3L356.3 149.7L356.1 151.4L354.5 151.9L353.0 152.6L351.6 153.8L350.7 155.5L349.3 156.7L348.9 158.5L349.0 160.4L350.3 161.8L351.2 163.4L353.1 164.1L354.7 165.3L356.7 165.8L358.5 166.6L360.5 166.6L362.4 167.4L363.5 169.2L364.1 171.3L364.6 172.3L365.0 170.7L365.6 169.0L366.0 167.4L367.5 165.7L369.2 164.2L367.9 162.7L367.3 160.9L367.4 159.2L368.1 157.6L368.0 155.9L367.6 154.2L369.2 155.0L371.1 154.6L372.6 155.5L374.3 155.8L376.6 157.0L377.0 158.6L377.7 160.1L380.0 160.4L382.3 158.4L383.8 159.7L384.6 161.4L386.1 164.2L387.4 165.8L389.5 166.6L390.8 168.2L391.6 170.1L392.5 172.0L390.6 172.6L388.7 173.2L386.9 174.0L385.0 174.5L383.2 174.8L381.3 175.0L379.4 175.4L381.2 175.7L382.9 176.0L382.3 178.7L383.9 179.5L385.7 180.1L386.9 180.8L385.1 181.8L383.3 182.7L381.5 183.6L380.6 181.2L380.1 181.8L379.1 180.2L378.9 178.4L377.5 178.1L376.8 179.8L375.5 181.1L374.9 181.5L373.1 181.4L371.2 181.5L369.4 182.6L367.9 183.2L366.4 183.9L366.4 184.4L364.5 185.5L362.4 186.1L361.8 185.2L362.3 183.4L362.4 181.5L360.2 179.4L358.4 178.3L356.3 177.7L354.4 176.8L352.7 176.8L351.2 176.3L349.5 176.3L347.9 175.7L346.3 176.1L344.7 175.8L343.1 176.1L341.5 175.8L339.9 175.7L338.3 176.2L336.7 175.6L335.1 176.1L333.5 175.5L331.9 175.5L330.3 175.7L328.7 176.1L327.1 175.7L325.5 175.8L323.9 175.3L322.3 176.1L320.7 175.4L319.1 175.3L317.5 175.5L315.9 175.7L314.2 174.4L312.3 173.5L310.6 171.3L309.0 169.7L307.9 167.9L307.6 167.1L308.3 165.0L307.1 163.5L305.4 162.6L303.7 160.9L302.0 159.2L300.2 158.2L298.0 157.9L295.8 157.9L296.1 156.2L295.5 154.4L296.0 152.7L296.1 151.0L295.4 149.3L295.6 147.5L296.0 145.8L295.5 144.1L296.1 142.4ZM310.1 173.1L311.6 173.8L312.7 175.2L314.5 175.6L315.7 176.8L314.5 175.3L312.3 173.5ZM323.0 198.1L323.6 199.7L324.2 201.3L325.4 203.9L326.7 205.3L328.4 206.2L330.0 207.9L331.2 209.9L330.5 208.0L329.5 206.7L329.0 205.2L328.2 203.8L327.2 202.3L326.2 201.0L325.7 199.3L327.3 200.7L328.6 202.5L330.0 203.9L331.8 205.4L333.1 207.4L335.1 209.6L335.5 211.3L336.5 212.7L337.5 214.5L339.1 215.5L340.7 216.6L342.6 217.2L344.4 217.1L346.1 217.9L347.9 217.9L349.8 218.6L351.3 219.8L353.4 220.6L355.5 221.4L356.7 221.6L358.5 223.7L359.3 225.3L361.8 227.0L364.6 228.3L365.8 226.3L367.3 227.9L367.6 228.3L368.2 226.5L365.3 225.7L363.5 226.2L362.6 225.8L361.6 225.1L361.0 222.7L361.4 221.0L361.6 219.3L358.9 218.2L356.1 218.3L355.9 216.3L356.3 214.7L357.3 213.3L357.5 211.6L355.8 211.7L354.2 211.8L353.3 213.6L351.8 214.2L350.2 214.6L348.8 215.5L346.9 214.3L345.6 212.7L344.9 210.8L345.8 208.6L345.7 206.3L344.4 205.2L343.0 204.4L341.9 203.0L340.9 201.5L339.0 202.5L337.3 201.5L336.4 200.1L335.0 199.0L333.1 199.6L329.9 199.6L327.7 199.0L325.7 197.9ZM368.2 226.5L370.3 224.6L371.8 223.7L374.7 222.3L374.9 223.9L376.6 222.7L378.2 224.0L380.1 224.4L382.0 224.4L383.8 224.2L385.7 224.2L387.4 226.8L388.6 227.9L390.0 228.7L391.8 229.2L393.4 229.8L395.2 230.0L396.8 230.9L397.9 232.7L399.4 234.2L399.9 236.5L402.0 236.6L403.9 237.6L405.9 239.3L407.5 239.9L409.2 239.8L410.8 240.5L412.5 240.7L414.1 242.1L416.2 242.7L416.6 245.6L415.5 247.0L414.4 248.4L413.6 250.0L412.5 251.3L412.5 253.4L412.1 255.3L411.3 257.2L410.4 259.9L409.7 261.7L408.5 263.1L407.1 263.1L405.3 263.6L403.6 264.3L402.8 265.8L401.9 267.2L401.1 268.7L399.7 270.3L399.0 272.3L397.1 274.2L396.2 275.6L395.1 276.8L393.8 277.9L392.3 277.9L389.8 277.5L391.6 279.7L390.8 281.9L389.0 282.1L387.3 283.0L385.5 283.0L385.4 284.8L384.6 286.3L384.0 288.0L383.2 289.9L381.7 291.4L379.4 292.9L381.3 294.4L380.4 296.2L379.6 297.9L378.4 299.4L377.5 301.1L378.4 302.3L376.7 303.4L375.1 304.6L373.2 303.8L371.5 302.4L371.0 300.5L370.3 298.7L370.3 297.0L370.0 295.3L370.3 293.6L371.4 292.4L371.6 290.7L372.6 289.4L372.3 286.6L372.8 284.3L372.6 282.3L373.1 280.3L373.3 278.6L374.3 277.1L374.8 275.4L375.2 273.6L375.0 271.7L375.5 269.7L375.5 267.7L375.6 265.8L376.1 263.8L375.7 261.8L376.4 259.8L376.3 257.8L375.0 256.8L373.5 256.1L372.3 255.0L370.9 254.3L369.7 252.3L368.5 250.2L367.9 248.6L366.9 247.3L365.6 246.2L365.2 244.5L364.0 243.3L363.7 241.8L365.2 239.3L364.6 237.6L365.1 236.0L366.4 234.8L367.3 233.4L368.3 232.0L367.9 230.2L367.6 228.3ZM267.9 167.9L266.0 168.6L264.1 168.8L263.3 169.4L264.9 168.6L266.7 168.5ZM260.7 151.7L262.4 152.5L264.2 152.8L262.2 152.3ZM282.7 161.8L281.0 163.4L280.3 162.4ZM470.5 164.8L470.3 166.6L468.8 166.0L469.4 165.2ZM477.8 161.9L477.1 163.6L476.9 162.7ZM329.9 119.8L331.5 119.7L331.3 121.3L332.2 122.0L331.5 120.7L330.0 122.2L329.0 121.7L328.2 120.8ZM340.2 119.5L340.7 120.5L341.7 121.2L342.4 122.0L341.4 121.5L340.3 120.9L338.9 122.2L337.9 121.2L338.8 120.0ZM346.4 120.5L347.6 121.2L348.1 122.5L346.8 123.4L346.0 121.3L344.7 122.0L346.0 121.8ZM347.6 127.9L348.4 129.2L349.8 129.5L348.6 130.5L347.7 128.4L346.4 129.1ZM365.2 131.8L366.0 132.7L367.2 132.5L368.0 133.5L369.2 133.3L368.2 133.6L367.3 134.3L366.4 134.7L365.2 134.0L364.6 132.9ZM335.6 132.4L336.8 134.0L335.0 134.6L333.9 133.1Z"/>
<path fill="#b1cdf3" d="M315.9 175.7L317.5 175.6L319.1 176.0L320.7 175.9L322.3 176.1L323.9 175.9L325.5 175.5L327.1 175.8L328.7 175.7L330.3 176.0L331.9 175.8L333.5 175.5L335.1 175.9L336.7 176.2L338.3 175.5L339.9 176.1L341.5 175.3L343.1 175.5L344.7 175.5L346.3 176.0L347.9 175.7L349.5 176.4L351.1 176.5L352.8 176.4L354.4 176.8L356.2 177.9L358.3 178.4L360.2 179.4L362.4 181.5L362.3 183.4L361.8 185.2L362.4 186.1L364.5 185.6L366.4 184.4L366.4 183.9L367.9 183.3L369.4 182.6L371.2 181.5L373.1 181.7L374.9 181.5L375.5 181.1L376.6 179.7L377.5 178.1L378.9 178.4L379.1 180.2L380.1 181.8L378.1 182.2L376.4 183.4L376.6 185.9L374.4 186.8L372.2 187.6L371.0 189.8L369.9 192.2L370.3 194.7L368.8 195.3L367.5 196.5L365.3 197.8L364.2 198.8L363.6 200.9L364.5 203.1L364.6 204.8L365.1 206.4L364.2 207.3L363.1 205.6L362.1 203.9L361.8 202.4L360.3 201.3L359.5 201.6L357.0 200.8L355.0 200.9L354.7 202.5L353.2 201.9L351.6 201.9L349.3 201.6L348.4 202.1L346.9 203.1L345.4 204.0L345.7 206.3L344.5 205.1L343.0 204.4L342.0 202.9L340.9 201.5L339.0 202.5L337.3 201.5L336.1 200.4L335.0 199.0L333.1 199.6L329.9 199.6L327.7 199.0L325.7 197.9L323.0 198.1L321.4 196.2L319.1 195.6L317.5 192.9L316.8 191.3L315.8 189.5L314.7 187.8L314.2 186.1L314.5 184.3L315.2 182.1L315.1 179.8L314.4 178.3L314.3 176.6L317.1 177.8ZM295.8 140.7L294.1 140.8L292.4 140.4L291.0 139.3L289.2 139.5L287.6 139.4L285.9 139.2L284.3 138.8L282.8 137.9L281.2 137.7L279.5 137.3L277.9 137.2L275.8 137.6L274.1 138.9L272.0 139.2L270.5 140.2L269.2 141.3L267.6 142.0L266.4 143.2L267.8 144.4L269.4 145.4L271.2 146.0L269.7 146.9L267.9 146.9L266.3 147.5L264.9 148.4L266.2 149.8L268.0 150.5L269.7 150.4L271.4 150.8L273.0 151.4L271.6 152.6L270.2 153.5L268.4 154.1L269.1 155.7L270.1 157.1L271.3 158.4L273.1 159.4L275.0 160.3L277.0 160.9L275.6 162.2L274.5 163.8L273.0 165.0L271.7 166.1L270.3 166.8L268.7 167.2L271.3 166.9L272.9 166.4L274.1 165.3L275.6 164.7L277.2 164.0L278.7 163.4L279.7 162.0L281.1 161.1L282.4 160.1L283.8 159.2L284.8 157.9L285.5 156.3L287.8 156.8L290.1 157.6L291.9 157.8L293.6 158.8L295.4 158.8L297.2 159.2L298.9 160.5L300.9 161.3L302.0 163.4L303.1 164.7L304.3 165.8L306.1 166.0L307.6 167.1L308.3 165.0L306.8 163.8L305.4 162.6L303.7 161.0L302.0 159.2L300.1 158.3L298.0 157.9L295.8 157.9L295.6 156.2L295.9 154.4L295.8 152.7L295.5 151.0L296.1 149.3L295.4 147.5L296.0 145.8L295.5 144.1L295.3 142.4Z"/>
<path fill="#77a5ea" d="M605.0 185.2L606.5 184.1L607.6 184.6L609.4 183.0L611.5 181.9L612.8 180.5L614.1 179.1L614.6 177.0L616.0 175.7L616.3 173.9L616.6 172.0L617.1 169.6L615.4 168.2L614.5 166.2L613.6 164.2L615.2 163.2L616.3 161.6L617.9 160.6L619.4 159.4L621.1 159.2L622.8 159.6L624.5 159.0L626.3 159.5L628.0 159.1L629.5 158.3L631.0 157.7L632.7 157.6L634.2 156.8L635.6 155.9L637.3 155.8L638.8 155.1L640.3 154.4L642.1 154.7L643.6 154.1L642.7 155.4L641.9 156.8L641.3 158.4L639.9 159.1L638.7 160.2L637.3 161.0L635.9 161.8L634.5 162.6L633.9 164.4L634.3 166.4L633.7 168.2L633.6 169.8L634.7 171.3L634.6 172.9L635.6 171.2L637.0 169.7L638.7 168.1L640.8 166.9L641.3 164.7L642.4 162.6L642.8 160.3L644.1 159.0L645.3 157.7L646.9 157.2L648.6 157.3L650.0 156.3L651.7 156.2L653.3 155.8L655.0 155.3L656.8 154.9L658.4 154.1L658.6 152.1L658.4 150.1L660.2 150.3L661.9 150.1L663.7 150.2L665.5 150.1L667.2 150.9L669.0 150.6L670.4 149.7L671.8 148.7L673.0 147.5L671.2 147.1L669.7 146.3L668.1 145.4L666.4 145.0L664.9 144.0L663.2 143.3L661.8 142.1L660.2 141.9L658.5 141.3L656.8 141.6L655.1 141.4L653.5 141.1L651.9 140.5L650.2 140.4L648.4 140.2L646.7 140.8L644.9 140.9L643.1 140.8L641.4 140.8L639.6 140.7L638.1 140.1L636.4 140.0L634.9 139.3L633.3 139.0L631.9 137.8L630.3 137.5L628.5 137.6L627.1 136.7L625.4 135.9L623.5 136.2L621.8 135.5L620.2 134.5L618.4 134.2L616.6 134.0L614.9 134.7L613.4 135.9L611.7 136.7L609.6 137.0L607.5 136.6L605.5 136.7L603.9 135.9L602.7 134.7L601.5 133.4L600.3 132.2L598.7 132.7L597.0 132.5L595.4 132.3L593.7 132.4L592.1 132.7L590.5 132.7L588.8 132.9L587.2 133.3L585.5 133.1L584.5 131.6L583.2 130.2L581.5 127.9L579.8 126.8L578.1 125.6L576.7 124.0L575.1 122.7L573.1 123.1L571.5 124.2L569.7 124.8L567.9 125.6L566.1 126.0L564.5 126.8L562.8 127.6L561.0 127.9L558.7 128.3L556.5 129.1L554.7 129.4L553.0 130.2L551.3 130.9L549.6 131.5L548.0 132.4L549.0 134.4L550.2 136.1L548.3 135.5L546.2 135.1L544.5 136.7L543.6 138.5L542.8 140.2L541.7 141.9L540.5 143.4L539.7 145.2L538.3 146.5L538.4 144.8L538.9 143.1L539.0 141.3L539.1 139.6L539.2 137.8L537.9 136.3L537.0 134.6L536.0 132.9L535.3 134.4L534.5 135.8L533.9 137.4L533.2 138.8L532.4 140.5L532.0 142.3L530.4 141.4L528.5 141.5L526.9 140.6L525.2 140.2L523.3 140.7L521.5 141.6L519.6 142.2L517.8 142.8L516.0 142.4L514.3 143.2L512.6 142.7L510.8 143.0L509.1 142.5L507.3 142.3L505.6 142.7L504.6 143.9L503.6 145.2L502.3 146.5L500.7 147.3L497.9 148.6L496.1 147.7L499.0 146.3L500.7 145.5L502.4 144.6L500.4 143.4L498.4 142.3L496.4 141.7L494.2 141.5L491.8 140.4L489.1 141.9L488.9 143.6L489.9 146.2L490.3 147.8L490.5 149.4L491.0 151.0L490.2 153.3L489.9 155.6L487.9 157.6L490.8 158.6L488.3 159.4L487.9 161.0L487.5 162.6L488.4 165.0L490.5 165.0L491.6 166.5L492.5 168.2L492.5 170.8L495.1 170.8L496.5 172.5L497.9 173.5L499.6 173.8L502.0 175.0L500.5 177.6L499.8 178.7L497.9 181.1L499.3 181.9L501.8 183.7L503.6 183.9L505.2 184.8L507.0 185.1L509.3 185.3L511.6 185.8L510.4 184.3L510.8 182.3L510.7 180.4L510.4 178.9L509.2 176.5L510.1 175.0L511.8 174.4L512.6 172.8L513.8 171.7L515.6 171.9L517.3 172.6L518.9 173.4L520.5 172.9L522.0 172.2L523.6 172.2L525.2 171.9L526.1 170.5L527.2 169.3L528.0 167.9L529.7 167.5L531.4 167.1L533.1 166.8L534.9 166.8L537.1 167.3L539.4 167.4L541.4 168.0L543.4 167.9L544.7 169.4L546.2 170.7L547.4 172.3L549.3 172.9L551.3 172.9L552.8 173.7L554.3 174.4L555.7 175.4L556.3 175.0L558.3 174.1L560.5 173.8L562.4 174.2L564.3 174.3L566.2 174.3L568.1 174.3L568.5 172.7L568.9 171.1L570.7 172.1L572.7 172.8L574.4 174.0L577.3 173.8L579.3 175.3L581.2 175.6L583.1 174.9L585.0 174.9L586.7 174.0L589.2 174.4L590.3 173.2L591.6 172.0L592.6 170.7L593.5 169.3L595.5 169.2L597.5 169.3L599.2 170.3L600.7 171.6L601.2 173.3L601.8 175.0L603.8 176.1L605.5 177.6L607.6 177.4L609.7 176.6L609.2 178.2L608.2 179.6L607.9 181.2L606.7 183.3L605.1 185.1ZM466.1 166.9L467.6 166.9L468.8 167.6L470.1 168.0L471.7 167.9L472.5 168.3L472.7 169.7L473.4 172.8L473.1 172.9L470.2 173.8L471.1 175.3L472.0 176.3L471.1 177.8L467.9 177.9L464.9 177.8L465.6 175.7L463.6 175.0L463.2 174.1L463.1 173.1L463.1 171.6L464.3 170.7L464.5 169.3L465.6 168.8ZM534.3 124.7L532.8 125.4L531.3 126.1L529.7 126.6L528.2 127.5L526.7 128.2L524.9 128.3L523.5 129.1L522.2 130.4L520.8 131.5L519.3 132.6L517.8 133.5L519.1 135.2L520.5 136.7L521.8 138.4L519.9 137.9L518.0 137.4L516.1 137.2L516.3 135.6L517.2 134.1L517.2 132.4L518.7 131.8L519.7 130.3L521.4 130.0L522.8 129.1L524.1 128.1L525.1 126.7L526.7 126.1L528.6 126.0L530.5 125.5L532.3 124.6ZM508.1 113.8L509.7 113.1L511.4 113.8L513.0 113.3L514.6 112.7L516.2 112.4L517.9 112.2L519.5 112.1L521.2 112.1L523.0 112.9L524.9 113.1L526.8 113.5L528.4 114.6L530.3 114.8L528.4 115.0L526.7 115.9L524.8 115.6L523.0 116.2L521.2 116.7L519.5 116.5L517.8 116.6L516.1 116.5L514.4 116.6L512.7 116.6L510.9 116.9L509.3 115.5ZM565.6 113.8L567.3 114.5L569.0 115.0L570.7 115.8L572.5 116.2L574.0 117.2L575.9 117.5L576.4 119.7L577.0 122.0L575.4 122.0L573.8 121.7L572.2 121.6L570.6 121.0L569.0 120.8L567.2 120.1L565.8 118.7L564.1 118.0L562.6 116.7L561.0 115.6L562.6 115.0L564.1 114.4ZM612.9 126.8L614.6 127.3L616.5 126.6L618.2 127.5L620.0 127.3L621.7 127.6L623.5 127.8L625.3 128.1L627.1 127.9L628.2 129.8L626.5 130.2L624.7 130.4L622.8 130.2L621.1 131.3L619.3 131.1L617.5 131.4L615.7 131.8L613.9 131.9L612.3 131.1L610.6 130.9L611.9 128.9ZM660.7 136.7L663.5 137.4L662.4 138.0L659.5 137.8ZM618.5 167.7L618.5 169.5L619.3 171.1L619.5 172.8L619.0 174.6L619.5 176.4L619.5 178.1L619.5 179.9L617.9 180.1L618.3 178.2L617.6 176.2L618.1 174.3L618.1 172.5L617.8 170.7L617.4 168.9Z"/>
<path fill="#fff" d="M489.4 186.7L487.6 185.0L488.1 184.0L490.1 181.2L491.3 179.4L493.3 181.1L494.4 182.1L497.9 181.1L499.3 181.9L501.5 183.4L503.7 186.2L501.5 187.0L497.6 186.6L496.3 185.7L492.5 186.3ZM496.4 180.9L496.5 179.7L500.1 178.5L500.9 178.4L499.6 180.1L498.0 181.1ZM515.4 178.5L510.7 180.4L510.4 184.3L513.2 187.8L512.0 190.5L513.6 192.3L517.6 192.6L517.6 191.0L516.5 188.4L516.2 186.3L513.6 182.2L516.6 180.8L516.9 178.9ZM525.2 179.2L523.0 181.2L523.7 182.9L526.0 181.8ZM355.5 176.0L360.0 179.1L356.7 179.4L351.6 179.1L353.3 177.9ZM359.5 180.2L356.3 184.3L357.2 186.1L358.0 182.9ZM360.7 179.8L363.9 180.8L363.3 183.9L361.2 182.9ZM366.4 184.4L361.6 186.1L364.1 185.0L365.8 183.6L369.2 183.6L369.4 182.6L366.4 183.9Z"/>
<path fill="none" d="M479.6 141.7L476.9 143.1L473.4 147.7L472.1 151.4L470.3 155.3L469.3 159.9M479.8 141.9L481.5 142.8L483.7 148.1M491.4 140.2L489.6 140.4L489.1 141.9M446.2 185.8L447.0 185.5L448.4 187.0L448.3 188.4L448.0 189.7L448.2 191.0L447.9 192.1M454.2 183.7L456.3 184.6L458.2 185.0L459.9 185.1M459.1 172.6L460.9 173.5L463.1 174.9L465.6 175.7M463.1 171.6L460.9 172.2M464.9 177.8L463.2 179.5L464.3 180.2L463.9 181.5L464.8 183.2M464.3 180.1L467.7 179.4L470.0 178.8L471.9 179.2L472.0 180.6M467.2 177.9L468.3 178.7M472.0 176.3L473.4 175.7L475.5 176.3L475.7 177.2L475.1 177.5L474.6 178.9L472.8 179.4L471.9 179.2M473.1 172.9L475.7 174.0L477.7 174.9L479.6 175.2L482.0 175.4L483.7 173.1L483.2 171.9L482.7 170.7L483.1 168.3L482.3 167.6L478.6 167.6M475.5 176.3L477.7 175.0M475.7 177.2L477.6 177.5L479.6 176.8L481.5 176.3M483.2 171.9L486.1 172.0L491.1 171.4L492.5 170.8M481.5 176.3L484.6 177.3L487.6 176.8L490.6 179.4L490.1 180.9M486.6 176.8L488.4 179.4L488.4 180.8M483.1 168.3L486.7 166.3L488.4 165.3M480.3 164.5L485.8 164.8L488.4 165.0M484.0 161.9L487.5 162.6M480.4 166.1L482.3 167.6M482.4 177.3L479.4 179.8L481.9 181.8L482.4 183.3L485.3 183.3L487.5 182.8L488.9 183.3M479.4 179.8L477.7 180.2L475.1 179.4M474.3 181.3L477.9 181.2L478.5 182.5L477.4 184.8M478.5 184.0L479.2 185.2L478.5 184.8M479.6 186.6L479.4 188.8M479.8 185.2L481.8 185.2L482.4 186.6M479.9 186.6L482.4 187.0L484.8 186.3L486.4 186.1L488.2 185.7M482.4 183.3L481.8 185.2M485.9 187.3L486.4 186.1M503.6 186.3L505.8 186.9L507.3 189.2L507.3 192.2L504.5 192.1L501.8 192.6L498.0 192.9L497.4 193.8M507.5 186.7L508.1 188.1L509.2 189.8M511.6 185.8L509.2 186.9L507.5 186.7M504.5 192.1L503.0 195.6L500.5 197.0M500.5 197.0L500.9 198.8L497.9 202.3L496.0 202.0M500.9 198.8L504.1 200.0L507.2 202.4L509.2 202.4L510.9 202.1M507.3 192.2L508.6 194.2L508.7 196.9L510.5 199.4L511.5 201.3M497.5 195.4L497.1 197.1L496.9 197.9L498.4 198.1L500.5 197.0M495.4 199.6L496.0 201.9M505.0 217.6L506.5 216.5L509.8 216.7L515.5 214.6L519.1 210.3L515.0 208.4M515.5 214.6L516.8 217.4M519.1 210.3L519.8 208.4L520.2 206.2M507.3 189.2L512.0 190.5M517.7 191.8L523.8 191.8L526.0 192.9L526.0 194.2L525.4 196.2L526.7 199.5L525.6 201.5L527.9 204.7L526.4 207.2M516.5 186.6L518.9 185.9L520.1 186.7L520.1 181.5L523.0 180.6M516.5 186.6L517.2 185.7M523.0 182.2L524.4 183.3L531.5 185.4L534.3 187.2L536.1 185.2L541.1 184.6L543.4 184.0L547.6 184.4M520.1 186.7L524.8 186.2L528.8 189.6L532.0 191.9M526.0 194.2L527.2 192.3L532.0 191.9L534.0 192.1L537.7 191.7L541.2 192.2M536.0 189.0L540.2 189.3L537.1 188.1L536.6 187.0L541.1 184.6M540.2 189.3L542.1 187.7L547.6 184.4M525.6 201.5L531.8 201.9L535.1 199.3L537.2 196.2L537.8 192.7L541.2 192.2M534.0 209.0L537.1 208.3L536.1 204.0L540.4 201.3L541.2 198.1L544.9 195.3L541.2 192.2M547.6 184.4L550.2 181.5L551.0 178.4L555.7 175.4M544.9 195.3L546.2 198.1L547.6 200.3L547.7 202.9L551.9 205.6L556.6 205.6L556.6 203.9L549.1 201.0M557.6 205.2L557.6 203.8L561.0 204.6L561.0 204.0L567.1 203.5M557.8 211.4L557.1 205.7L561.4 207.2L561.4 212.2M567.1 203.5L568.6 206.8L568.9 209.2L571.4 211.5L573.7 210.4L577.8 210.1L579.3 211.6M567.1 203.5L567.3 205.0L563.9 208.0L562.5 211.0L561.4 212.2M570.3 212.9L567.4 215.3L568.8 218.1L569.4 222.4L568.6 225.1M570.3 212.9L573.1 215.8L575.6 216.6L576.4 219.3L573.5 220.0L573.0 221.6L575.3 224.5M572.7 210.4L575.2 212.8L577.7 216.9L578.7 219.6L577.2 223.9M570.4 229.1L572.1 229.8M556.3 175.6L559.8 179.4L562.2 181.5L566.2 184.7L571.9 185.0L575.9 186.2L581.0 185.0L583.7 181.6L588.5 180.5L592.7 179.1L591.8 177.6L590.4 175.0L589.2 174.4M605.1 185.1L602.3 186.5L597.8 188.4M598.6 191.0L602.5 190.2M587.9 231.7L586.7 234.8L581.5 235.3M616.8 239.4L616.8 246.7M453.8 194.8L454.9 198.6L446.4 201.9L446.4 204.1L441.3 204.1M446.4 204.6L446.4 206.2L442.6 206.2L442.6 209.2L441.5 211.8L437.1 211.8M446.4 204.6L450.8 207.4L459.0 212.1L461.1 214.3L469.9 209.2M466.1 192.3L465.4 197.4L467.1 201.0L467.6 205.6L467.9 208.3L469.9 209.2M469.4 197.2L467.1 201.0M450.8 207.4L448.9 207.4L450.1 218.7L445.7 218.7L442.4 219.5L437.7 217.5M461.1 214.3L460.4 218.9L456.5 219.4L452.3 221.0L450.1 223.8L447.2 224.8L443.3 222.3L442.4 219.5M469.9 209.2L473.4 209.2L473.9 214.1L471.8 221.0L471.1 220.8L462.0 221.2L460.4 222.9L458.8 222.2L456.5 219.4M484.9 199.3L484.8 211.0L483.6 213.4L483.6 214.0L473.4 209.2M484.8 211.0L498.3 211.0M483.6 214.0L483.5 218.4L481.6 221.6L482.4 224.0L477.9 226.2L474.5 227.9L474.1 225.1L472.8 221.6L471.8 221.0M482.4 224.0L487.0 225.6L490.5 224.7L494.1 225.3L496.1 222.5L497.9 219.8L500.2 215.8M497.9 219.8L500.4 219.6L504.4 222.2M497.4 221.8L495.0 226.8L497.2 231.3L500.7 232.5L504.0 231.9L510.9 227.3L505.3 223.9M504.0 231.9L503.7 238.4M482.4 224.0L487.5 230.8L491.4 232.5L494.8 232.1L497.2 231.3M487.5 230.8L482.1 231.7L477.5 232.4L474.8 234.1L472.7 229.6L474.5 227.9M472.8 221.6L471.7 225.1L469.4 229.1L466.1 231.2M467.5 234.0L471.4 234.0L474.8 234.1M470.5 242.2L473.7 241.4L476.2 237.6L477.5 232.4M491.4 232.5L490.0 237.8L489.6 241.5L491.1 245.9L487.8 249.6L483.5 250.5L481.1 244.8L471.1 243.3M497.2 231.3L495.6 235.1L495.0 237.6L500.9 241.8M491.0 237.6L495.0 237.6M502.3 248.3L496.1 249.6L493.9 247.3L491.1 245.9M469.6 256.4L477.9 256.5L480.2 257.2L479.1 261.9L479.1 269.9L475.1 269.9M479.1 265.3L485.6 266.4L489.8 262.3L491.9 262.4L492.7 266.6L493.8 267.8M490.9 254.4L487.0 257.2L485.1 256.9L489.8 262.3M483.5 250.5L482.3 256.5L485.1 256.9M490.9 254.4L491.9 262.4M496.1 249.6L496.5 253.1L496.3 255.4L490.9 254.4M442.1 222.2L437.3 222.2M443.3 222.3L443.8 225.1L446.7 227.9L447.8 231.5M447.2 224.8L450.0 224.5L450.1 223.8M453.0 230.7L453.1 223.9L457.4 223.9L457.7 229.5M457.4 223.9L459.1 222.7L459.4 229.2M441.3 226.8L442.6 225.2L444.3 226.8L444.0 229.3M487.6 270.4L489.3 272.3M374.1 223.0L373.9 226.9L376.5 228.5L379.4 229.4L379.1 231.9L380.1 235.1L385.1 231.9L387.2 230.5L388.2 226.8M391.3 229.6L392.0 234.2L397.6 231.6M394.8 230.0L394.2 233.8M387.2 230.5L392.0 234.2M366.6 234.9L370.3 235.9L372.8 239.1L376.6 241.2L376.8 235.1L380.1 235.1M364.9 240.3L366.4 242.2L370.3 238.2M376.6 241.2L373.5 247.3L377.2 249.0L378.1 250.8L377.2 256.6L376.1 257.5M377.2 249.0L381.9 247.9L385.9 251.9L387.8 255.2L390.3 258.7L385.0 261.9L379.1 262.9L377.2 256.6M379.1 262.9L378.2 268.0L376.6 275.4L374.7 284.6L374.6 292.9L374.3 301.7L378.2 302.3M385.0 261.9L390.6 265.9L393.1 268.3L394.1 266.3L395.0 268.1L390.7 271.9L389.8 276.7M390.3 258.7L392.8 262.0L394.5 264.3L394.1 266.3M390.7 271.9L393.1 272.9L395.5 276.3M382.1 306.2L378.2 302.6M351.3 219.8L352.7 216.0L354.9 216.0L355.8 215.2M353.7 220.8L355.9 218.4M356.9 221.6L361.6 219.3M358.7 223.8L361.0 224.0M361.8 227.0L362.2 225.5M354.5 220.1L356.3 221.1M354.9 216.0L354.7 218.2M374.7 213.8L374.6 215.8"/>
</g></svg><!--/MAP-->

<!-- card 2 -->
<div class="card" style="left:235px;top:344px;width:319px;height:145.5px"></div>
<div class="ttl" style="left:250px;top:354px">Browser language</div>
<div class="th" style="left:250px;top:389.5px">Languages</div>
<div class="th" style="left:492.5px;top:389.5px">Visitors</div>
<div class="td" style="left:250px;top:414.5px">Russian</div>
<div class="num" style="left:483px;top:413.5px">7</div>
<div class="bar" style="left:507.5px;top:410.5px;width:28px"></div>
<div class="pct" style="left:514px;top:415.5px">88%</div>
<div class="td" style="left:250px;top:435.8px">English</div>
<div class="num" style="left:483px;top:434.8px">1</div>
<div class="bar" style="left:507.5px;top:431.8px;width:4.3px"></div>
<div class="pct" style="left:514px;top:436.8px">13%</div>
<div class="mais" style="left:377.5px;top:466px">Mais</div>
<svg class="a" style="left:403px;top:466px" width="10" height="9" viewBox="0 0 10 9"><path d="M1 4.5H8.5M5 1L8.5 4.5L5 8" fill="none" stroke="#505661" stroke-width=".95"/></svg>

<!-- card 3 -->
<div class="card" style="left:564px;top:344px;width:319px;height:145.5px"></div>
<div class="ttl" style="left:579px;top:354px">Referrers</div>
<div class="th" style="left:579px;top:389.5px">Referrers</div>
<div class="th" style="left:824px;top:389.5px">Views</div>
<div class="td" style="left:579px;top:414.5px">backend.onlypult.com</div>
<div class="num" style="left:812px;top:413.5px">2</div>
<div class="bar" style="left:836.5px;top:410.5px;width:21px"></div>
<div class="pct" style="left:843px;top:415.5px">67%</div>
<div class="td" style="left:579px;top:435.8px">l.facebook.com</div>
<div class="num" style="left:812px;top:434.8px">1</div>
<div class="bar" style="left:836.5px;top:431.8px;width:10.5px"></div>
<div class="pct" style="left:843px;top:436.8px">33%</div>
<div class="mais" style="left:706px;top:466px">Mais</div>
<svg class="a" style="left:731px;top:466px" width="10" height="9" viewBox="0 0 10 9"><path d="M1 4.5H8.5M5 1L8.5 4.5L5 8" fill="none" stroke="#505661" stroke-width=".95"/></svg>

<!-- card 4 -->
<div class="card" style="left:235px;top:500px;width:648px;height:150px"></div>
<div class="ttl" style="left:250px;top:510px">Technologies and devices</div>
<div class="vdiv" style="left:452px;top:544px;height:100px"></div>
<div class="vdiv" style="left:665px;top:544px;height:100px"></div>
<div class="th" style="left:250px;top:545px">Browsers</div>
<div class="th" style="left:395.5px;top:545px">Visitors</div>
<div class="td" style="left:250px;top:570px">Chrome</div>
<div class="num" style="left:385px;top:569px">6</div>
<div class="bar" style="left:411px;top:566px;width:23px"></div>
<div class="pct" style="left:417.5px;top:571px">75%</div>
<div class="td" style="left:250px;top:591.3px">Firefox</div>
<div class="num" style="left:385px;top:590.3px">2</div>
<div class="bar" style="left:411px;top:587.3px;width:8px"></div>
<div class="pct" style="left:417.5px;top:592.3px">25%</div>

<div class="th" style="left:463px;top:545px">Operating systems</div>
<div class="th" style="left:609px;top:545px">Visitors</div>
<div class="td" style="left:463px;top:570px">Windows</div>
<div class="num" style="left:598.5px;top:569px">7</div>
<div class="bar" style="left:624px;top:566px;width:27.5px"></div>
<div class="pct" style="left:630.5px;top:571px">88%</div>
<div class="td" style="left:463px;top:591.3px">Android</div>
<div class="num" style="left:598.5px;top:590.3px">1</div>
<div class="bar" style="left:624px;top:587.3px;width:4.2px"></div>
<div class="pct" style="left:630.5px;top:592.3px">13%</div>

<div class="th" style="left:676px;top:545px">Devices</div>
<div class="th" style="left:821.7px;top:545px">Visitors</div>
<div class="td" style="left:676px;top:570px">Laptop</div>
<div class="num" style="left:811px;top:569px">6</div>
<div class="bar" style="left:836.5px;top:566px;width:23px"></div>
<div class="pct" style="left:843px;top:571px">75%</div>
<div class="td" style="left:676px;top:591.3px">Desktop</div>
<div class="num" style="left:811px;top:590.3px">1</div>
<div class="bar" style="left:836.5px;top:587.3px;width:4.2px"></div>
<div class="pct" style="left:843px;top:592.3px">13%</div>
<div class="td" style="left:676px;top:612.6px">Mobile</div>
<div class="num" style="left:811px;top:611.6px">1</div>
<div class="bar" style="left:836.5px;top:608.6px;width:4.2px"></div>
<div class="pct" style="left:843px;top:613.6px">13%</div>

<div id="botline" class="a"></div>
<div id="rline" class="a"></div>
</body></html>
